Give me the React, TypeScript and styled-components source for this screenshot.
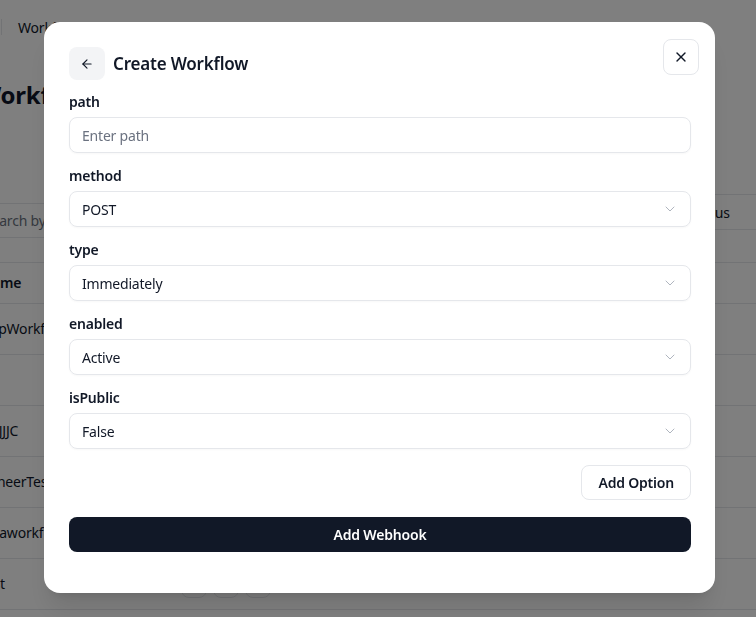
import * as React from 'react';
import styled, { createGlobalStyle } from 'styled-components';
import { ArrowLeft, ChevronDown, X } from 'lucide-react';

const GlobalStyle = createGlobalStyle`
  html, body {
    margin: 0;
    padding: 0;
    background: #ffffff;
    overflow: hidden;
  }
  body {
    font-family: 'Noto Sans', 'Open Sans', 'Liberation Sans', sans-serif;
    color: #0f172a;
    letter-spacing: -0.2px;
  }
  * {
    box-sizing: border-box;
  }
`;

/* ---------- page behind the dialog ---------- */

const Page = styled.div`
  width: 756px;
  height: 617px;
  overflow: hidden;
`;

const TopBar = styled.header`
  height: 54px;
  display: flex;
  align-items: center;
  gap: 16px;
  padding-left: 1px;
`;

const Divider = styled.span`
  width: 1px;
  height: 16px;
  background: #e5e7eb;
`;

const Crumb = styled.span`
  font-size: 14px;
  color: #0f172a;
`;

const Main = styled.main`
  margin-left: -22px;
  width: 820px;
  display: flex;
  flex-direction: column;
`;

const PageTitle = styled.h1`
  margin: 25px 0 0;
  font-size: 24px;
  line-height: 32px;
  font-weight: 700;
  color: #0f172a;
`;

const Toolbar = styled.div`
  margin-top: 83px;
  display: flex;
  align-items: flex-start;
  gap: 379px;
`;

const Search = styled.div`
  flex: none;
  margin-top: 9px;
  width: 320px;
  height: 35px;
  border: 1px solid #e5e7eb;
  border-radius: 6px;
  padding: 0 5px;
  display: flex;
  align-items: center;
  font-size: 14px;
  color: #6b7280;
`;

const StatusSelect = styled.div`
  flex: none;
  width: 140px;
  height: 36px;
  border: 1px solid #e5e7eb;
  border-radius: 6px;
  padding: 0 12px;
  display: flex;
  align-items: center;
  font-size: 14px;
  color: #0f172a;
`;

const Table = styled.div`
  margin-top: 24px;
  border-top: 1px solid #e5e7eb;
`;

const Row = styled.div<{ $head?: boolean }>`
  height: ${p => (p.$head ? '41px' : '51px')};
  border-bottom: 1px solid #e5e7eb;
  display: grid;
  grid-template-columns: 200px 1fr;
  align-items: center;
  padding: 0 3px 1px;
  font-size: 14px;
  font-weight: ${p => (p.$head ? 600 : 400)};
  color: #0f172a;
`;

const RowActions = styled.div`
  display: flex;
  gap: 6px;
`;

const IconBtn = styled.span`
  width: 26px;
  height: 28px;
  border: 1px solid #e5e7eb;
  border-radius: 8px;
`;

/* ---------- dialog ---------- */

const Overlay = styled.div`
  position: fixed;
  inset: 0;
  padding: 0 0 2px 3px;
  background: rgba(0, 0, 0, 0.5);
  display: flex;
  align-items: center;
  justify-content: center;
`;

const Dialog = styled.div`
  position: relative;
  width: 671px;
  background: #ffffff;
  border-radius: 16px;
  padding: 25px 24px 41px 25px;
  box-shadow: 0 20px 25px -5px rgba(0, 0, 0, 0.1), 0 8px 10px -6px rgba(0, 0, 0, 0.1);
  display: flex;
  flex-direction: column;
`;

const CloseButton = styled.button`
  position: absolute;
  top: 17px;
  right: 16px;
  width: 36px;
  height: 36px;
  border: 1px solid #e5e7eb;
  border-radius: 8px;
  background: #ffffff;
  display: flex;
  align-items: center;
  justify-content: center;
  color: #111827;
  padding: 0;
`;

const Header = styled.div`
  display: flex;
  align-items: center;
  gap: 8px;
`;

const BackButton = styled.button`
  width: 36px;
  height: 33px;
  border: none;
  border-radius: 8px;
  background: #f3f4f6;
  display: flex;
  align-items: center;
  justify-content: center;
  color: #111827;
  padding: 0;
`;

const Title = styled.h2`
  margin: 0;
  font-size: 17px;
  line-height: 28px;
  font-weight: 600;
  color: #111827;
`;

const Form = styled.div`
  margin-top: 12px;
  display: flex;
  flex-direction: column;
  gap: 13px;
`;

const Field = styled.div`
  display: flex;
  flex-direction: column;
  gap: 5px;
`;

const Label = styled.label`
  font-size: 14px;
  line-height: 20px;
  font-weight: 600;
  color: #111827;
`;

const Control = styled.div<{ $placeholder?: boolean }>`
  height: 36px;
  border: 1px solid #e5e7eb;
  border-radius: 8px;
  padding: 0 12px;
  display: flex;
  align-items: center;
  justify-content: space-between;
  font-size: 14px;
  color: ${p => (p.$placeholder ? '#6b7280' : '#111827')};
  box-shadow: 0 1px 2px rgba(0, 0, 0, 0.03);

  svg {
    color: #9ca3af;
    opacity: 0.8;
  }
`;

const Actions = styled.div`
  margin-top: 16px;
  display: flex;
  justify-content: flex-end;
`;

const OutlineButton = styled.button`
  height: 35px;
  padding: 0 16px;
  border: 1px solid #e5e7eb;
  border-radius: 8px;
  background: #ffffff;
  font-family: inherit;
  letter-spacing: inherit;
  font-size: 14px;
  font-weight: 600;
  color: #111827;
`;

const PrimaryButton = styled.button`
  margin-top: 17px;
  height: 35px;
  border: none;
  border-radius: 8px;
  background: #111827;
  font-family: inherit;
  letter-spacing: inherit;
  font-size: 14px;
  font-weight: 600;
  color: #ffffff;
`;

const rows = ['AppWorkflow', 'ab', 'ABJJJC', 'MineerTest', 'Javaworkflow', 'test'];

const fields = [
  { label: 'method', value: 'POST' },
  { label: 'type', value: 'Immediately' },
  { label: 'enabled', value: 'Active' },
  { label: 'isPublic', value: 'False' },
];

export default function App() {
  return (
    <>
      <GlobalStyle />
      <Page>
        <TopBar>
          <Divider />
          <Crumb>Workflows</Crumb>
        </TopBar>
        <Main>
          <PageTitle>Workflows</PageTitle>
          <Toolbar>
            <Search>Search by name...</Search>
            <StatusSelect>Status</StatusSelect>
          </Toolbar>
          <Table>
            <Row $head>
              <span>Name</span>
              <span>Description</span>
            </Row>
            {rows.map((name, i) => (
              <Row key={name}>
                <span>{name}</span>
                {i === rows.length - 1 ? (
                  <RowActions>
                    <IconBtn />
                    <IconBtn />
                    <IconBtn />
                  </RowActions>
                ) : (
                  <span />
                )}
              </Row>
            ))}
          </Table>
        </Main>
      </Page>

      <Overlay>
        <Dialog>
          <CloseButton aria-label="Close">
            <X size={16} strokeWidth={2} />
          </CloseButton>
          <Header>
            <BackButton aria-label="Back">
              <ArrowLeft size={14} strokeWidth={2} />
            </BackButton>
            <Title>Create Workflow</Title>
          </Header>
          <Form>
            <Field>
              <Label>path</Label>
              <Control $placeholder>Enter path</Control>
            </Field>
            {fields.map(f => (
              <Field key={f.label}>
                <Label>{f.label}</Label>
                <Control>
                  <span>{f.value}</span>
                  <ChevronDown size={16} strokeWidth={1.5} />
                </Control>
              </Field>
            ))}
          </Form>
          <Actions>
            <OutlineButton>Add Option</OutlineButton>
          </Actions>
          <PrimaryButton>Add Webhook</PrimaryButton>
        </Dialog>
      </Overlay>
    </>
  );
}
